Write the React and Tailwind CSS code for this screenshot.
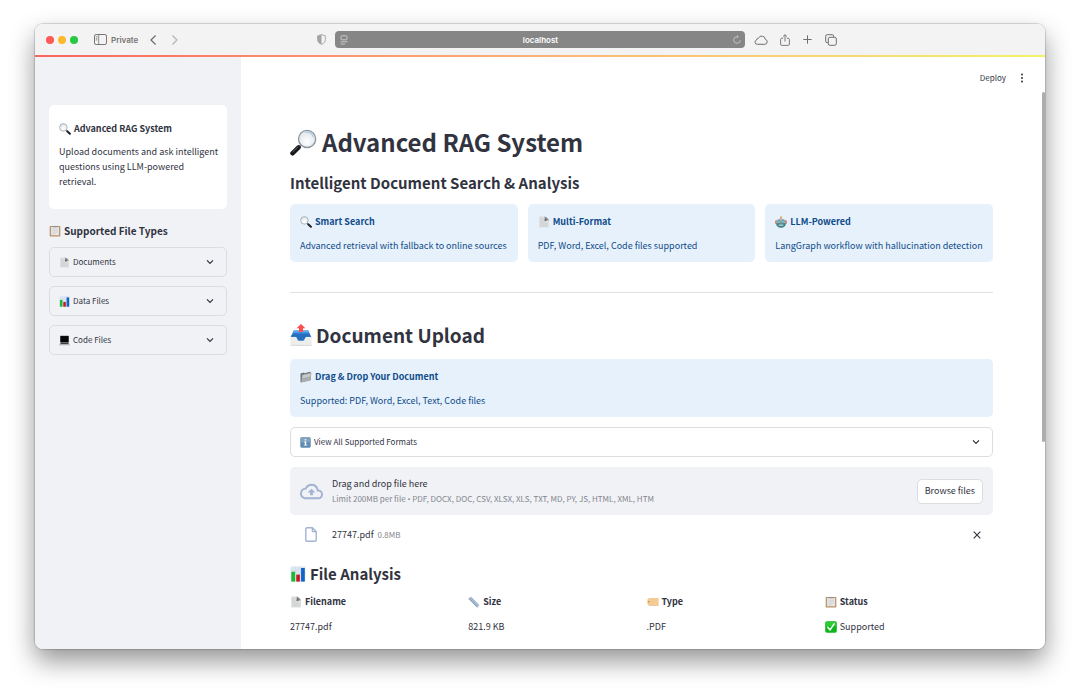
import React, { useState } from 'react';

/* ---------- Emoji style icons ---------- */

const Magnifier = ({ className, flip }) => (
  <svg viewBox="0 0 24 24" className={className} aria-hidden="true">
    <defs>
      <radialGradient id="lens" cx="50%" cy="65%" r="60%">
        <stop offset="0" stopColor="#ffffff" />
        <stop offset="1" stopColor="#dfe5ea" />
      </radialGradient>
    </defs>
    <g transform={flip ? 'translate(24 0) scale(-1 1)' : undefined}>
      <path d="M14.2 14.2l2.2 2.2" stroke="#8b8f93" strokeWidth="2" />
      <path d="M16.4 16.4l5.4 5.2" stroke="#17191c" strokeWidth="4" strokeLinecap="round" />
      <path d="M16.8 15.8l4.6 4.4" stroke="#6a6e72" strokeWidth="0.8" strokeLinecap="round" />
      <circle cx="8.8" cy="8.8" r="7.6" fill="url(#lens)" stroke="#8d959c" strokeWidth="1.2" />
      <path d="M3 7.4a6.2 6.2 0 0 1 7.8-4.4" stroke="#a9c6e4" strokeWidth="0.9" fill="none" />
    </g>
  </svg>
);

const Clipboard = ({ className }) => (
  <svg viewBox="0 0 24 24" className={className} aria-hidden="true">
    <rect x="1.4" y="1.8" width="21.2" height="21.4" rx="1.6" fill="#b98d62" />
    <rect x="3.8" y="4" width="16.4" height="16.6" fill="#e4e5e6" />
    <path d="M6 8.5h12M6 11.5h12M6 14.5h12M6 17.5h8" stroke="#c3c6c9" strokeWidth="0.9" />
    <path d="M7.4 4.6V2.6h2.8a1.9 1.9 0 0 1 3.6 0h2.8v2z" fill="#8e9296" />
  </svg>
);

const PageCurl = ({ className }) => (
  <svg viewBox="0 0 24 24" className={className} aria-hidden="true">
    <path d="M2.4 1.2h10.4c1.6 3 4.8 6 9 7.4v14.2H2.4z" fill="#dcddde" />
    <path d="M4.5 5.5h6M4.5 8.5h6M4.5 11.5h9M4.5 14.5h14M4.5 17.5h14M4.5 20.2h14" stroke="#c2c4c6" strokeWidth="0.8" />
    <path d="M12.8 1.2c4.4 1 7.8 4 9 8-3-1.4-5.4-1.2-8.6.8.6-3.2.6-6-.4-8.8z" fill="#85888b" />
    <path d="M13.2 10c.6-1.8.6-3 .4-4.8 1.4 2 3.4 3.2 6 3.4-2.4-.4-4.2.2-6.4 1.4z" fill="#4d5053" />
  </svg>
);

const BarChart = ({ className }) => (
  <svg viewBox="0 0 24 24" className={className} aria-hidden="true">
    <rect x="1" y="0.6" width="22" height="22.8" fill="#dbe6f0" />
    <path d="M1 6.3h22M1 12h22M1 17.7h22M8.3 .6v22.8M15.6 .6v22.8" stroke="#c3d3e2" strokeWidth="0.5" />
    <rect x="2" y="8.6" width="5.6" height="14.8" fill="#1dbb32" />
    <rect x="9.4" y="13" width="5.4" height="10.4" fill="#c8191f" />
    <rect x="16.6" y="3" width="5.6" height="20.4" fill="#1163c9" />
  </svg>
);

const Laptop = ({ className }) => (
  <svg viewBox="0 0 24 24" className={className} aria-hidden="true">
    <rect x="2.6" y="1.4" width="18.8" height="15.4" rx="1" fill="#3c3f42" />
    <rect x="3.6" y="2.4" width="16.8" height="13.2" fill="#060707" />
    <path d="M3 16.8h18l2.4 4.6H.6z" fill="#96999c" />
    <path d="M4.600 17.600h14.800l1 1.800H3.600z" fill="#3e4144" />
    <path d="M.6 21.400h22.800v1.400H.6z" fill="#c5c7c9" />
  </svg>
);

const Robot = ({ className }) => (
  <svg viewBox="0 0 24 24" className={className} aria-hidden="true">
    <path d="M12 2.5v4" stroke="#8a8d90" strokeWidth="1.4" />
    <circle cx="12" cy="2.4" r="1.9" fill="#e9a13b" />
    <rect x="0.6" y="8.4" width="3.6" height="7.6" rx="1.6" fill="#d6563d" />
    <rect x="19.8" y="8.4" width="3.6" height="7.6" rx="1.6" fill="#d6563d" />
    <path d="M2.2 12.4C2.2 7.4 6.400 4.800 12 4.800s9.800 2.600 9.800 7.600v3.200H2.200z" fill="#a9b2b5" />
    <path d="M2.200 14.400h19.600c0 5.600-4 9-9.800 9s-9.800-3.400-9.800-9z" fill="#3f7f87" />
    <circle cx="8" cy="11.600" r="2.700" fill="#5fe0ea" stroke="#4c6166" strokeWidth="0.8" />
    <circle cx="16" cy="11.600" r="2.700" fill="#5fe0ea" stroke="#4c6166" strokeWidth="0.8" />
    <path d="M12 12.600l1.400 2.400h-2.800z" fill="#d6563d" />
    <rect x="7" y="17" width="10" height="2.600" rx="1.200" fill="#b9dfe2" />
  </svg>
);

const OutboxTray = ({ className }) => (
  <svg viewBox="0 0 24 24" className={className} aria-hidden="true">
    <path d="M4 7h16l3.4 7.600H.6z" fill="#2f7fd2" />
    <path d="M4 7h16l1 2.400H3z" fill="#62a8ea" />
    <path d="M12 0l4.800 4.600h-2.600v4.200H9.800V4.600H7.200z" fill="#fb4f4b" />
    <path d="M.4 14h5.800c1.200 0 1.500 4 3.200 4h5.200c1.700 0 2-4 3.200-4h5.800v9.400H.4z" fill="#edeeec" />
    <path d="M.8 14h5.600c1.200 0 1.500 4.200 3.200 4.200h4.800c1.700 0 2-4.200 3.200-4.200h5.600l-2.400-3H3.200z" fill="#256fbe" />
    <path d="M.4 22.8h23.200v.8H.4z" fill="#cfcfcd" />
  </svg>
);

const Folder = ({ className }) => (
  <svg viewBox="0 0 24 24" className={className} aria-hidden="true">
    <path d="M1 5l7-2 1 1.4L20 1.600l1.400 1V18L3 22.600H1z" fill="#6f7376" />
    <path d="M4.400 7.400L23 3.400l-2.200 15.800L2.400 23z" fill="#a9acae" />
    <path d="M5.400 8.600l16-3.400-.8 5.800L4.600 14.400z" fill="#c6c8ca" />
  </svg>
);

const InfoBadge = ({ className }) => (
  <svg viewBox="0 0 24 24" className={className} aria-hidden="true">
    <rect x="0.6" y="0.6" width="22.8" height="22.8" rx="3" fill="#5f8cb0" />
    <rect x="2" y="2" width="20" height="9.6" rx="2" fill="#7ba3c2" />
    <circle cx="12" cy="6" r="1.9" fill="#fff" />
    <path d="M9 9.8h4.600v7h2v2H8.600v-2h2v-5H9z" fill="#fff" />
  </svg>
);

const Ruler = ({ className }) => (
  <svg viewBox="0 0 24 24" className={className} aria-hidden="true">
    <path d="M1 5.600L5.600 1 23 18.400 18.400 23z" fill="#a9bfd4" />
    <path d="M1 5.600l1-1L19.400 22l-1 1z" fill="#7a92aa" />
    <path d="M7.600 3l-2 2M10.200 5.600L7.600 8.200M12.800 8.200l-2 2M15.400 10.800l-2.600 2.600M18 13.400l-2 2M20.600 16L18 18.600" stroke="#6f869d" strokeWidth="0.9" />
  </svg>
);

const Tag = ({ className }) => (
  <svg viewBox="0 0 24 24" className={className} aria-hidden="true">
    <path d="M3.600 4h19.600v15H3.600L.6 15.600V7.400z" fill="#f4cb95" />
    <path d="M3.600 18h19.600v1H3.600l-.8-1z" fill="#dcae75" />
    <circle cx="3.800" cy="11.500" r="1.300" fill="#a8793f" />
  </svg>
);

const CheckMark = ({ className }) => (
  <svg viewBox="0 0 24 24" className={className} aria-hidden="true">
    <rect x="0.4" y="0.4" width="23.2" height="23.2" rx="3.6" fill="#0fb51c" />
    <rect x="1.6" y="1.6" width="20.8" height="9" rx="2.6" fill="#2ccb38" />
    <path d="M5.600 12.400l4.600 5.400L18.200 5.600" stroke="#fff" strokeWidth="3" fill="none" strokeLinecap="round" strokeLinejoin="round" />
  </svg>
);

/* ---------- Line icons ---------- */

const Chevron = () => (
  <svg viewBox="0 0 8 8" className="size-2 shrink-0" fill="none" stroke="#31333f" strokeWidth="1.2" aria-hidden="true">
    <path d="M1 2.300l3 3 3-3" />
  </svg>
);

const CloudUpload = () => (
  <svg viewBox="0 0 24 24" className="size-[23px]" fill="#a3b3d1" aria-hidden="true">
    <path d="M19.350 10.040A7.490 7.490 0 0 0 12 4C9.110 4 6.600 5.640 5.350 8.040A5.994 5.994 0 0 0 0 14c0 3.310 2.690 6 6 6h13c2.760 0 5-2.240 5-5 0-2.640-2.050-4.780-4.650-4.960zM19 18H6c-2.210 0-4-1.790-4-4 0-2.050 1.530-3.760 3.560-3.970l1.070-.11.5-.95A5.469 5.469 0 0 1 12 6c2.620 0 4.880 1.860 5.390 4.430l.3 1.500 1.530.11A2.980 2.980 0 0 1 22 15c0 1.650-1.350 3-3 3zM8 13h2.550v3h2.900v-3H16l-4-4z" />
  </svg>
);

const FileOutline = () => (
  <svg viewBox="0 0 12 15" className="h-[15px] w-3" fill="none" stroke="#a3b3d1" strokeWidth="1.4" strokeLinejoin="round" aria-hidden="true">
    <path d="M7.400 .8H2A1.200 1.200 0 0 0 .8 2v11A1.200 1.200 0 0 0 2 14.200h8a1.200 1.200 0 0 0 1.200-1.200V4.600z" />
    <path d="M7.400 .8v3.800h3.800" />
  </svg>
);

/* ---------- Data ---------- */

const fileTypes = [
  { label: 'Documents', Icon: PageCurl },
  { label: 'Data Files', Icon: BarChart },
  { label: 'Code Files', Icon: Laptop },
];

const features = [
  { title: 'Smart Search', text: 'Advanced retrieval with fallback to online sources', Icon: Magnifier },
  { title: 'Multi-Format', text: 'PDF, Word, Excel, Code files supported', Icon: PageCurl },
  { title: 'LLM-Powered', text: 'LangGraph workflow with hallucination detection', Icon: Robot },
];

const columns = [
  { label: 'Filename', Icon: PageCurl },
  { label: 'Size', Icon: Ruler },
  { label: 'Type', Icon: Tag },
  { label: 'Status', Icon: Clipboard },
];

/* ---------- Components ---------- */

function BrowserBar() {
  const [url, setUrl] = useState('localhost');

  return (
    <div className="flex h-[31px] items-center bg-[#f3f3f3] font-['Inter',sans-serif] text-[8px] text-[#737373]">
      {/* Window buttons and navigation */}
      <div className="flex flex-1 items-center pr-[9px] pl-[11px]">
        <div className="flex gap-1">
          <span className="size-2 rounded-full bg-[#fd5a54]" />
          <span className="size-2 rounded-full bg-[#fdb92c]" />
          <span className="size-2 rounded-full bg-[#28c840]" />
        </div>
        <button type="button" aria-label="Sidebar" className="ml-4">
          <svg viewBox="0 0 13 11" className="h-[11px] w-[13px]" fill="none" stroke="#767676">
            <rect x="0.5" y="0.5" width="12" height="10" rx="1.6" />
            <path d="M4.700 .5v10M1.800 2.700h1.600M1.800 4.300h1.600M1.800 5.900h1.600" strokeWidth="0.8" />
          </svg>
        </button>
        <span className="ml-1 font-semibold">Private</span>
        <button type="button" aria-label="Back" className="ml-3">
          <svg viewBox="0 0 6 10" className="h-2.5 w-1.5" fill="none" stroke="#6b6b6b" strokeWidth="1.2" strokeLinecap="round">
            <path d="M5.300 .8L1 5l4.300 4.200" />
          </svg>
        </button>
        <button type="button" aria-label="Forward" className="ml-4">
          <svg viewBox="0 0 6 10" className="h-2.5 w-1.5" fill="none" stroke="#b5b5b5" strokeWidth="1.2" strokeLinecap="round">
            <path d="M.7 .8L5 5 .7 9.200" />
          </svg>
        </button>
        <button type="button" aria-label="Privacy report" className="ml-auto">
          <svg viewBox="0 0 9 11" className="h-[11px] w-[9px]">
            <path d="M4.500 .6l3.900 1.300v3.600c0 2.200-1.500 3.900-3.900 4.900C2.100 9.400.6 7.700.6 5.500V1.900z" fill="none" stroke="#a3a3a3" strokeWidth="0.9" />
            <path d="M4.500 .6v9.800C2.100 9.400.6 7.700.6 5.500V1.900z" fill="#a3a3a3" />
          </svg>
        </button>
      </div>

      {/* Address field */}
      <div className="flex h-[17px] w-[41%] max-w-[410px] items-center rounded-[4px] bg-[#868686] pr-1 pl-[5px]">
        <svg viewBox="0 0 8 10" className="h-2.5 w-2" fill="none" stroke="#cfcfcf" strokeWidth="0.9" aria-hidden="true">
          <rect x="1" y="0.8" width="6" height="4" rx="0.8" />
          <path d="M.5 6.800h7M.5 9h4.500" />
        </svg>
        <input
          type="text"
          aria-label="Address"
          value={url}
          onChange={(e) => setUrl(e.target.value)}
          className="min-w-0 flex-1 bg-transparent text-center font-semibold text-white outline-none"
        />
        <button type="button" aria-label="Reload">
          <svg viewBox="0 0 8 9" className="h-[9px] w-2" fill="none" stroke="#c4c4c4" strokeWidth="0.9">
            <path d="M7.300 5a3.300 3.300 0 1 1-3.300-3.300h1M3.800 .3l1.500 1.400-1.500 1.500" />
          </svg>
        </button>
      </div>

      {/* Right tools */}
      <div className="flex flex-1 items-center pr-[11px] pl-[9px]">
        <button type="button" aria-label="iCloud tabs">
          <svg viewBox="0 0 14 10" className="h-2.5 w-3.5" fill="none" stroke="#6f6f6f" strokeWidth="1">
            <path d="M3.400 9.300h7.300a2.500 2.500 0 0 0 .7-4.900A3.700 3.700 0 0 0 4.500 3 2.100 2.100 0 0 0 2.600 5a2.200 2.200 0 0 0 .8 4.300z" />
          </svg>
        </button>
        <button type="button" aria-label="Share" className="ml-3">
          <svg viewBox="0 0 10 12" className="h-3 w-2.5" fill="none" stroke="#6f6f6f" strokeWidth="0.9">
            <path d="M3.200 4.200H1.800a1.200 1.200 0 0 0-1.200 1.200v4.800a1.200 1.200 0 0 0 1.200 1.200h6.400a1.200 1.200 0 0 0 1.200-1.200V5.400a1.200 1.200 0 0 0-1.200-1.200H6.800M5 7.600V.8M3 2.600L5 .7l2 1.900" />
          </svg>
        </button>
        <button type="button" aria-label="New tab" className="ml-[13px]">
          <svg viewBox="0 0 9 9" className="size-[9px]" stroke="#6f6f6f" strokeWidth="1">
            <path d="M4.500 .3v8.400M.3 4.500h8.400" />
          </svg>
        </button>
        <button type="button" aria-label="Tab overview" className="ml-[13px]">
          <svg viewBox="0 0 12 12" className="size-3" fill="none" stroke="#6f6f6f" strokeWidth="1">
            <rect x="3.3" y="3.3" width="8" height="8" rx="1.6" />
            <path d="M3.300 8.700H2.200A1.500 1.500 0 0 1 .7 7.200v-5A1.500 1.500 0 0 1 2.200 .7h5a1.500 1.500 0 0 1 1.500 1.500v1.100" />
          </svg>
        </button>
      </div>
    </div>
  );
}

function Expander({ label, Icon }) {
  return (
    <button
      type="button"
      className="flex h-[30px] w-full items-center justify-between rounded-[5px] border border-[#dcdde1] pr-3 pl-[9px] text-[8px]"
    >
      <span className="flex items-center gap-[3px]">
        <Icon className="size-[11px]" />
        {label}
      </span>
      <Chevron />
    </button>
  );
}

function InfoCard({ title, text, Icon }) {
  return (
    <div className="rounded-[5px] bg-[#e7f1fc] px-2.5 pt-2.5 pb-[9px] leading-[15px] text-[#0f4c8a]">
      <p className="flex items-center gap-[3px] font-bold">
        <Icon className="size-3" />
        {title}
      </p>
      <p className="mt-[9px]">{text}</p>
    </div>
  );
}

function Sidebar() {
  return (
    <aside className="w-[206px] shrink-0 bg-[#f0f2f6] px-3.5 pt-12">
      <div className="rounded-[5px] bg-white pt-4 pr-2 pb-5 pl-2.5 leading-[15px]">
        <p className="flex items-center gap-[3px] font-bold">
          <Magnifier className="size-3" />
          Advanced RAG System
        </p>
        <p className="mt-2">
          Upload documents and ask intelligent questions using LLM-powered retrieval.
        </p>
      </div>

      <h2 className="mt-3.5 mb-2 flex items-center gap-[3px] text-[10px] leading-4 font-bold">
        <Clipboard className="size-3" />
        Supported File Types
      </h2>
      <div className="flex flex-col gap-[9px]">
        {fileTypes.map((type) => (
          <Expander key={type.label} {...type} />
        ))}
      </div>
    </aside>
  );
}

function FileUploader() {
  const [file, setFile] = useState({ name: '27747.pdf', size: '0.8MB' });

  return (
    <div>
      <div className="flex h-12 items-center rounded-[5px] bg-[#f0f2f6] px-2.5">
        <CloudUpload />
        <div className="ml-[9px] flex-1">
          <p className="leading-[15px]">Drag and drop file here</p>
          <p className="text-[8px] leading-[15px] text-[#85868f]">
            Limit 200MB per file <span className="font-['Open_Sans',sans-serif]">•</span> PDF, DOCX, DOC, CSV, XLSX, XLS, TXT, MD, PY, JS, HTML, XML, HTM
          </p>
        </div>
        <button type="button" className="h-[25px] rounded-[5px] border border-[#dcdde1] bg-white px-[7px]">
          Browse files
        </button>
      </div>

      {/* Uploaded file */}
      {file && (
        <div className="flex h-[39px] items-center pr-3 pl-[15px]">
          <FileOutline />
          <span className="ml-[15px]">{file.name}</span>
          <span className="ml-1 text-[8px] text-[#85868f]">{file.size}</span>
          <button type="button" aria-label="Remove file" className="ml-auto" onClick={() => setFile(null)}>
            <svg viewBox="0 0 8 8" className="size-2" stroke="#31333f" strokeWidth="1.1">
              <path d="M.7 .7l6.600 6.600M7.300 .7L.7 7.300" />
            </svg>
          </button>
        </div>
      )}
    </div>
  );
}

function App() {
  return (
    <div className="flex min-h-screen bg-white px-[35px] pt-6 pb-[46px] font-['Noto_Sans_CJK_SC',sans-serif] text-[9px] text-[#31333f]">
      <div className="relative flex flex-1 flex-col overflow-hidden rounded-[8px] shadow-[0_0_1px_1px_rgba(0,0,0,0.15),0_12px_26px_rgba(0,0,0,0.42)]">
        <BrowserBar />
        <div className="h-0.5 bg-linear-to-r from-[#f8645f] via-[#fbb277] to-[#f2f26a]" />

        <div className="flex flex-1">
          <Sidebar />

          <main className="min-w-0 flex-1 bg-white pr-[3px]">
            <header className="flex h-[41px] items-center justify-end gap-3.5 pr-[18px] text-[8px]">
              <button type="button">Deploy</button>
              <button type="button" aria-label="Menu">
                <svg viewBox="0 0 4 10" className="h-2.5 w-1" fill="#31333f">
                  <circle cx="2" cy="1.6" r="1" />
                  <circle cx="2" cy="5" r="1" />
                  <circle cx="2" cy="8.4" r="1" />
                </svg>
              </button>
            </header>

            <div className="px-[49px] pt-7">
              <h1 className="flex items-center gap-[5px] text-[24px] leading-8 font-bold">
                <Magnifier className="size-[27px]" flip />
                Advanced RAG System
              </h1>
              <h2 className="mt-3.5 text-[15px] leading-[22px] font-semibold">
                Intelligent Document Search &amp; Analysis
              </h2>
              <div className="mt-2.5 grid grid-cols-3 gap-2.5">
                {features.map((feature) => (
                  <InfoCard key={feature.title} {...feature} />
                ))}
              </div>

              <hr className="mt-[30px] border-[#e0e1e4]" />

              <h2 className="mt-7 flex items-center gap-1 text-[19px] leading-7 font-semibold">
                <OutboxTray className="size-[22px]" />
                Document Upload
              </h2>
              <div className="mt-2.5 flex flex-col gap-2.5">
                <InfoCard
                  title="Drag & Drop Your Document"
                  text="Supported: PDF, Word, Excel, Text, Code files"
                  Icon={Folder}
                />
                <Expander label="View All Supported Formats" Icon={InfoBadge} />
                <FileUploader />
              </div>

              <h3 className="mt-[9px] flex items-center gap-1 text-[15px] leading-[22px] font-semibold">
                <BarChart className="size-4" />
                File Analysis
              </h3>
              <table className="mt-[9px] w-[calc(100%+10px)] table-fixed text-left leading-[15px]">
                <thead>
                  <tr>
                    {columns.map(({ label, Icon }) => (
                      <th key={label} scope="col" className="pb-2.5 font-bold">
                        <span className="flex items-center gap-[3px]">
                          <Icon className="size-3" />
                          {label}
                        </span>
                      </th>
                    ))}
                  </tr>
                </thead>
                <tbody>
                  <tr>
                    <td>27747.pdf</td>
                    <td>821.9 KB</td>
                    <td>.PDF</td>
                    <td>
                      <span className="flex items-center gap-[3px]">
                        <CheckMark className="size-3" />
                        Supported
                      </span>
                    </td>
                  </tr>
                </tbody>
              </table>
            </div>
          </main>
        </div>

        {/* Scrollbar thumb over the page */}
        <div className="absolute top-[68px] right-0 h-[56%] w-[3px] rounded-full bg-[#adadb0]" />
      </div>
    </div>
  );
}

export default App;
